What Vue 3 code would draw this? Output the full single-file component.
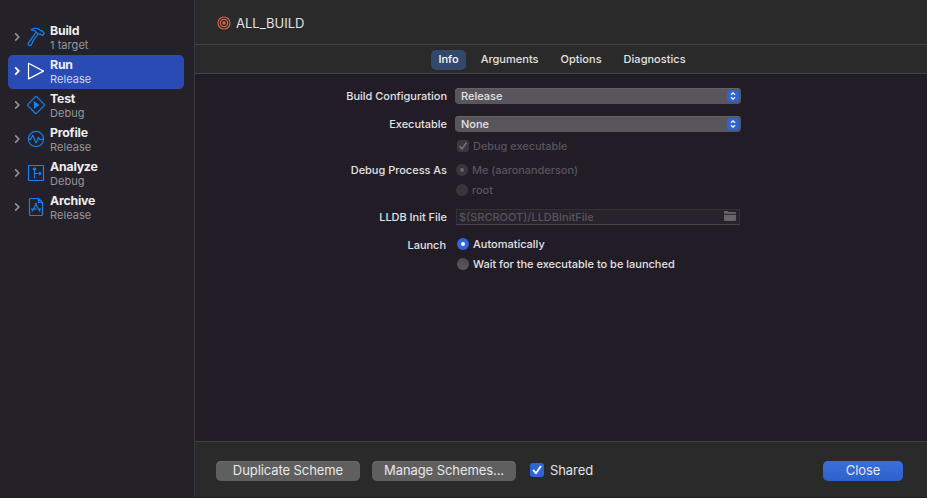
<script setup>
import { ref } from 'vue'

const actions = [
  { id: 'build', name: 'Build', detail: '1 target' },
  { id: 'run', name: 'Run', detail: 'Release' },
  { id: 'test', name: 'Test', detail: 'Debug' },
  { id: 'profile', name: 'Profile', detail: 'Release' },
  { id: 'analyze', name: 'Analyze', detail: 'Debug' },
  { id: 'archive', name: 'Archive', detail: 'Release' },
]
const selected = ref('run')
const tabs = ['Info', 'Arguments', 'Options', 'Diagnostics']
const activeTab = ref('Info')
</script>

<template>
  <div class="window">
    <nav class="sidebar">
      <div
        v-for="a in actions"
        :key="a.id"
        class="action"
        :class="{ selected: a.id === selected }"
        @click="selected = a.id"
      >
        <svg class="chevron" viewBox="0 0 6 10"><path d="M1.2 1.4 4.8 5 1.2 8.6" /></svg>
        <svg class="icon" viewBox="0 0 20 20">
          <g v-if="a.id === 'build'">
            <path d="M5.200 2.800C7.500 1 11 .9 13 2.300l1.900 1.600 1.500-.1 1.900 2.500-2 2.200-1.900-1.500-1.800.2-2.400-2C9.600 3.600 7.500 3.100 5.200 2.800Z" />
            <path d="M9.700 5.600 2.200 16.300c-.7 1.600 1.600 3.100 2.900 1.800l3.200-6.200L12.200 7" />
          </g>
          <path v-else-if="a.id === 'run'" d="M2.500 2.300v15.600l15-7.800Z" />
          <g v-else-if="a.id === 'test'">
            <path d="M9.300 1.800a1 1 0 0 1 1.400 0l7.500 7.500a1 1 0 0 1 0 1.400l-7.500 7.500a1 1 0 0 1-1.400 0L1.800 10.700a1 1 0 0 1 0-1.400Z" />
            <path class="solid" d="M7.800 6v8L13.400 10Z" />
          </g>
          <g v-else-if="a.id === 'profile'">
            <circle cx="10" cy="10" r="7.600" />
            <path d="M2.500 10.300h2.300l2-4 3.300 7.700 2.400-5.800 1 2.100h4" />
          </g>
          <g v-else-if="a.id === 'analyze'">
            <rect x="2.500" y="2.500" width="15" height="15" rx=".5" />
            <path d="M8.500 15.500V5M6.800 6.500 8.500 4.800l1.700 1.700M8.500 10.500H15M13.200 8.800l1.700 1.700-1.700 1.700" />
          </g>
          <g v-else>
            <path d="M4.500 1.500h8l4 4v12a1 1 0 0 1-1 1h-11a1 1 0 0 1-1-1v-15a1 1 0 0 1 1-1ZM12.500 1.700v3.800h3.800" />
            <path d="m9.200 6.300 4.900 8.500M10.700 6.300l-4.900 8.500M5 12.200h5.700M12.800 12.200H15" />
          </g>
        </svg>
        <div class="labels">
          <span class="name">{{ a.name }}</span>
          <span class="detail">{{ a.detail }}</span>
        </div>
      </div>
    </nav>

    <main class="main">
      <header class="title">
        <svg class="target" viewBox="0 0 14 14">
          <circle cx="7" cy="7" r="6" /><circle cx="7" cy="7" r="3.700" />
          <circle class="bull" cx="7" cy="7" r="1.800" />
        </svg>
        <span>ALL_BUILD</span>
      </header>
      <div class="tabs">
        <span
          v-for="t in tabs"
          :key="t"
          class="tab"
          :class="{ active: t === activeTab }"
          @click="activeTab = t"
        >{{ t }}</span>
      </div>

      <section class="form">
        <div class="row">
          <label class="config">Build Configuration</label>
          <div class="select"><span>Release</span><i class="stepper"><svg viewBox="0 0 12 12"><path d="M3.900 4.700 6 2.800l2.100 1.900M3.900 7.300 6 9.200l2.100-1.900" /></svg></i></div>
        </div>
        <div class="row">
          <label>Executable</label>
          <div class="select"><span>None</span><i class="stepper"><svg viewBox="0 0 12 12"><path d="M3.900 4.700 6 2.800l2.100 1.900M3.900 7.300 6 9.200l2.100-1.900" /></svg></i></div>
        </div>
        <div class="row check-row">
          <label></label>
          <div class="option disabled"><i class="check small"><svg viewBox="0 0 12 12"><path d="M2.800 6.400 5 9 9.200 3" /></svg></i><span>Debug executable</span></div>
        </div>
        <div class="row process-row">
          <label>Debug Process As</label>
          <div class="option disabled shifted"><i class="radio on"></i><span>Me (aaronanderson)</span></div>
        </div>
        <div class="row root-row">
          <label></label>
          <div class="option disabled shifted"><i class="radio"></i><span>root</span></div>
        </div>
        <div class="row file-row">
          <label>LLDB Init File</label>
          <div class="field">
            <span>$(SRCROOT)/LLDBInitFile</span>
            <svg viewBox="0 0 12 10"><path d="M0 2.800V.7L.7 0h3l.8.900H11.300l.7.700v1.200ZM0 3.700h12V9.300L11.300 10H.7L0 9.300Z" /></svg>
          </div>
        </div>
        <div class="row launch-row">
          <label class="launch">Launch</label>
          <div class="option"><i class="radio on"></i><span>Automatically</span></div>
        </div>
        <div class="row wait-row">
          <label></label>
          <div class="option"><i class="radio"></i><span>Wait for the executable to be launched</span></div>
        </div>
      </section>

      <footer class="footer">
        <button class="duplicate">Duplicate Scheme</button>
        <button class="manage">Manage Schemes...</button>
        <i class="check"><svg viewBox="0 0 14 14"><path d="M3.500 7.400 6 10.300 10.600 3.600" /></svg></i>
        <span class="shared">Shared</span>
        <button class="primary">Close</button>
      </footer>
    </main>
  </div>
</template>

<style>
body {
  margin: 0;
  background: #242228;
}
</style>

<style scoped>
.window {
  display: flex;
  width: 927px;
  height: 498px;
  box-sizing: border-box;
  border-bottom: 1px solid #1d1b1f;
  overflow: hidden;
  background: #242228;
  color: #e3e2e4;
  font-family: Inter, "Liberation Sans", sans-serif;
  font-size: 11px;
  font-weight: 500;
}
.sidebar {
  flex: none;
  width: 195px;
  box-sizing: border-box;
  padding: 21px 10px 0 8px;
  border-right: 1px solid #3a383e;
}
.action {
  display: flex;
  align-items: center;
  width: 176px;
  height: 34px;
  border-radius: 5px;
}
.action.selected {
  background: #294bb3;
}
.chevron {
  width: 6px;
  height: 10px;
  margin: 0 5px 2px 6px;
  fill: none;
  stroke: #99979c;
  stroke-width: 1.500;
}
.selected .chevron {
  stroke: #fff;
  stroke-width: 1.800;
}
.icon {
  width: 20px;
  height: 20px;
  margin: 0 0 2px 1px;
  fill: none;
  stroke: #1482f5;
  stroke-width: 1.200;
  stroke-linejoin: round;
}
.icon .solid {
  fill: #1482f5;
  stroke: none;
}
.selected .icon {
  stroke: #fff;
}
.labels {
  display: flex;
  flex-direction: column;
  margin-left: 4px;
  padding-bottom: 1px;
}
.name {
  font-size: 12.300px;
  line-height: 15px;
  font-weight: 700;
  letter-spacing: -0.200px;
  color: #eeedef;
}
.detail {
  font-size: 11px;
  line-height: 14px;
  font-weight: 400;
  letter-spacing: 0.050px;
  color: #98969b;
}
.selected .detail {
  color: #d0d8f2;
}
.main {
  flex: 1;
  display: flex;
  flex-direction: column;
  background: #211c26;
}
.title {
  display: flex;
  align-items: center;
  gap: 5px;
  height: 44px;
  padding: 2px 0 0 22px;
  box-sizing: border-box;
  background: #2a2a2a;
  font-size: 13px;
  font-weight: 400;
}
.target {
  width: 14px;
  height: 14px;
  fill: none;
  stroke: #d46046;
  stroke-width: 1.200;
}
.target .bull {
  fill: #d46046;
  stroke: none;
}
.tabs {
  display: flex;
  justify-content: center;
  align-items: center;
  height: 30px;
  box-sizing: border-box;
  gap: 8px;
  padding: 1px 0 0 2px;
  background: #2a2a2a;
  border-top: 1px solid #414141;
  border-bottom: 1px solid #414141;
}
.tab {
  height: 20px;
  line-height: 19px;
  padding: 0 7px;
  border-radius: 5px;
  letter-spacing: 0.020px;
}
.tab.active {
  background: #32496d;
  color: #fff;
}
.form {
  flex: 1;
  padding-top: 14px;
}
.row {
  display: flex;
  align-items: center;
  height: 16px;
  margin-bottom: 12px;
}
.row label {
  width: 252px;
  margin-right: 8px;
  text-align: right;
  letter-spacing: -0.020px;
  line-height: 16px;
}
.row label.launch {
  width: 251px;
  margin-right: 9px;
  padding-top: 2px;
}
.select {
  display: flex;
  justify-content: space-between;
  align-items: center;
  width: 286px;
  height: 16px;
  box-sizing: border-box;
  padding: 0 2px 0 6px;
  border-radius: 4px;
  background: #59555d;
  box-shadow: inset 0 1px #656168;
}
.stepper {
  width: 12px;
  height: 12px;
  border-radius: 3px;
  background: #2e63d4;
}
.stepper svg {
  display: block;
  fill: none;
  stroke: #fff;
  stroke-width: 1.200;
}
.option {
  display: flex;
  align-items: center;
  gap: 4px;
  padding-left: 2px;
  letter-spacing: -0.010px;
}
.option.shifted {
  padding-left: 1px;
}
.disabled {
  color: #59545d;
  letter-spacing: -0.050px;
}
.check-row {
  margin-top: -6px;
  margin-bottom: 8px;
}
.process-row,
.launch-row {
  margin-bottom: 4px;
}
.root-row {
  margin-bottom: 11px;
}
.radio {
  width: 12px;
  height: 12px;
  border-radius: 50%;
  background: linear-gradient(#4b484f, #59565d);
  display: grid;
  place-items: center;
}
.radio.on {
  background: #2e65db;
}
.radio.on::after {
  content: "";
  width: 4px;
  height: 4px;
  border-radius: 50%;
  background: #fff;
}
.disabled .radio {
  background: #39353d;
}
.disabled .radio::after {
  background: #68646b;
}
.check {
  display: block;
  width: 14px;
  height: 14px;
  border-radius: 3px;
  background: #2e65d4;
}
.check.small {
  width: 12px;
  height: 12px;
  background: #3b373f;
}
.check svg {
  display: block;
  fill: none;
  stroke: #fff;
  stroke-width: 1.800;
  stroke-linecap: round;
  stroke-linejoin: round;
}
.check.small svg {
  stroke: #77737b;
  stroke-width: 1.500;
}
.field {
  display: flex;
  justify-content: space-between;
  align-items: center;
  width: 284px;
  height: 16px;
  box-sizing: border-box;
  margin-left: 1px;
  padding: 0 3px 0 2px;
  border: 1px solid #343038;
  border-bottom-color: #48444b;
  background: #27222c;
  color: #59545d;
}
.field svg {
  width: 12px;
  height: 10px;
  margin-bottom: 2px;
  fill: #68646a;
}
.file-row {
  margin-bottom: 11px;
}
.footer {
  display: flex;
  align-items: center;
  height: 56px;
  box-sizing: border-box;
  padding: 2px 24px 0 21px;
  border-top: 1px solid #414141;
  background: #2a2a2a;
  font-size: 13px;
  font-weight: 400;
}
.footer button {
  width: 144px;
  height: 20px;
  padding: 0 0 1px;
  margin-right: 12px;
  border: 0;
  border-radius: 5px;
  background: #5f5f5f;
  box-shadow: inset 0 1px #6b6b6b;
  color: #e7e7e7;
  font: inherit;
  line-height: 19px;
  letter-spacing: -0.080px;
}
.footer .check {
  margin: -2px 6px 0 2px;
}
.footer .shared {
  margin-top: -2px;
  letter-spacing: -0.080px;
}
.footer .primary {
  width: 80px;
  margin: 0 0 0 auto;
  background: linear-gradient(#3970df, #2d60ca);
  box-shadow: none;
}
</style>
